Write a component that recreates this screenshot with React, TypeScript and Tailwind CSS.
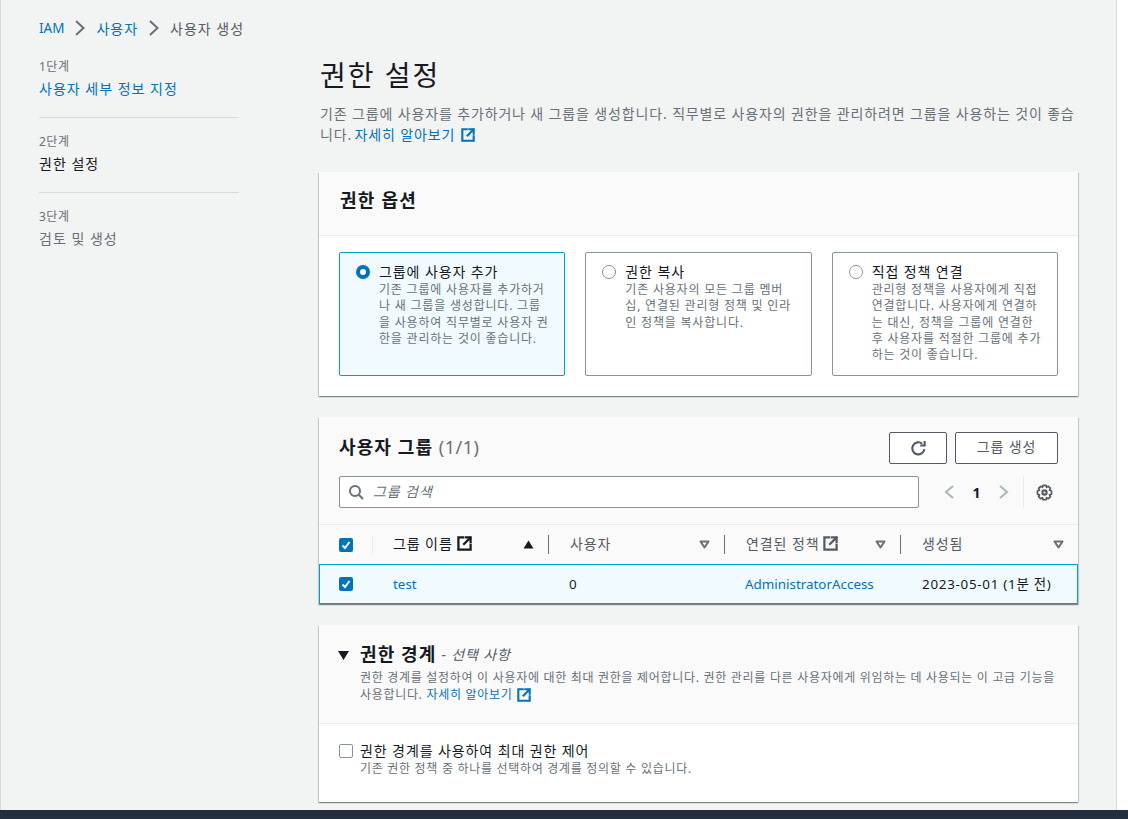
import React from "react";

const Ext = ({ className = "", size = 14 }: { className?: string; size?: number }) => (
  <svg width={size} height={size} viewBox="0 0 16 16" fill="none" stroke="currentColor" strokeWidth="2.4" strokeLinecap="square" className={"inline-block shrink-0 " + className}>
    <path d="M6.5 1.5H1.5v13h13V9.5" />
    <path d="M9.5 1.5h5V6.5" />
    <path d="M14 2L7.5 8.5" />
  </svg>
);

const Chevron = () => (
  <svg width="14" height="18" viewBox="0 0 14 18" fill="none" stroke="#687078" strokeWidth="2" className="shrink-0">
    <path d="M3 2l7.5 7-7.5 7" />
  </svg>
);

const Check = () => (
  <span className="flex h-[14px] w-[14px] shrink-0 items-center justify-center rounded-[2px] bg-[#0073bb]">
    <svg width="12" height="12" viewBox="0 0 12 12" fill="none" stroke="#fff" strokeWidth="2">
      <path d="M2.5 6.5l2.5 2.5 4.5-6" />
    </svg>
  </span>
);

const Sort = ({ color = "#687078", filled = false }: { color?: string; filled?: boolean }) => (
  <svg width="11" height="9" viewBox="0 0 11 9" className="shrink-0">
    {filled ? (
      <path d="M5.5 0.5L10.5 8.5H0.5z" fill={color} />
    ) : (
      <path d="M1.5 1.5h8L5.5 7.5z" fill="none" stroke={color} strokeWidth="2" strokeLinejoin="round" />
    )}
  </svg>
);

const Tile = ({ selected, title, lines }: { selected?: boolean; title: string; lines: string[] }) => (
  <div className={"flex h-[124px] flex-1 gap-[9px] rounded-[2px] border pl-[16px] pt-[10px] " + (selected ? "border-[#00a1c9] bg-[#f1faff]" : "border-[#879596] bg-white")}>
    {selected ? (
      <span className="mt-[2px] flex h-[14px] w-[14px] shrink-0 items-center justify-center rounded-full bg-[#0073bb]">
        <span className="h-[6px] w-[6px] rounded-full bg-white" />
      </span>
    ) : (
      <span className="mt-[2px] h-[14px] w-[14px] shrink-0 rounded-full border border-[#879596] bg-white" />
    )}
    <div className="min-w-0">
      <div className="whitespace-nowrap text-[14px] leading-[18px] tracking-[0.9px] text-[#16191f]">{title}</div>
      <div className="mt-[1px] text-[12px] leading-[16.25px] tracking-[0.8px] text-[#687078]">
        {lines.map((l) => (
          <div key={l} className="whitespace-nowrap">{l}</div>
        ))}
      </div>
    </div>
  </div>
);

const Th = ({ label, ext, dark, filled, last, pad }: { label: string; ext?: boolean; dark?: boolean; filled?: boolean; last?: boolean; pad: string }) => (
  <div className={"flex h-[19px] items-center justify-between " + pad + " " + (last ? "pr-[14px]" : "border-r border-[#687078] pr-[14px]")}>
    <span className={"-mt-[2px] flex items-center gap-[4px] whitespace-nowrap text-[14px] tracking-[0.9px] " + (dark ? "text-[#16191f]" : "text-[#545b64]")}>
      {label}
      {ext && <Ext size={15} />}
    </span>
    <Sort filled={filled} color={filled ? "#16191f" : "#687078"} />
  </div>
);

const Step = ({ step, label, tone, divider }: { step: string; label: string; tone: string; divider?: boolean }) => (
  <div className={divider ? "border-b border-[#d5dbdb] pb-[18px] mb-[15px]" : ""}>
    <div className="pt-[1px] text-[12px] leading-[16px] tracking-[0.5px] text-[#687078]">{step}</div>
    <div className={"mt-[4px] text-[14px] leading-[20px] tracking-[1px] " + tone}>{label}</div>
  </div>
);

const cardShadow = "bg-white shadow-[0_1px_1px_0_rgba(0,28,36,0.3),1px_1px_1px_0_rgba(0,28,36,0.15),-1px_1px_1px_0_rgba(0,28,36,0.15)]";

export default function App() {
  return (
    <div className="flex h-[819px] flex-col overflow-hidden bg-white font-['Noto_Sans','Noto_Sans_CJK_KR',sans-serif] text-[#16191f]">
      <div className="flex min-h-0 flex-1">
        <div className="w-[1117px] border-x border-[#d5dbdb] bg-[#f2f3f3] pt-[18px]">
          <div className="flex h-[20px] items-center gap-[9px] pl-[38px] text-[14px] text-[#545b64]">
            <span className="text-[13.5px] text-[#0073bb]">IAM</span>
            <Chevron />
            <span className="tracking-[1px] text-[#0073bb]">사용자</span>
            <Chevron />
            <span className="tracking-[1px]">사용자 생성</span>
          </div>
          <div className="mt-[20px] flex pl-[38px]">
            <aside className="w-[200px] shrink-0">
              <Step step="1단계" label="사용자 세부 정보 지정" tone="text-[#0073bb]" divider />
              <Step step="2단계" label="권한 설정" tone="text-[#16191f]" divider />
              <Step step="3단계" label="검토 및 생성" tone="text-[#687078]" />
            </aside>
            <main className="ml-[80px] w-[759px] shrink-0">
              <h1 className="-mt-[4px] ml-[1px] text-[28px] font-normal leading-[42px] tracking-[2px]">권한 설정</h1>
              <p className="ml-[1px] mt-[7px] w-[758px] text-[14px] leading-[21px] tracking-[0.86px] text-[#687078]">
                기존 그룹에 사용자를 추가하거나 새 그룹을 생성합니다. 직무별로 사용자의 권한을 관리하려면 그룹을 사용하는 것이 좋습니다.{" "}
                <span className="-ml-[2px] text-[#0073bb]">자세히 알아보기</span>{" "}
                <Ext size={14} className="ml-[1px] align-[-2px] text-[#0073bb]" />
              </p>

              <section className={"mt-[27px] " + cardShadow}>
                <div className="flex h-[64px] items-center border-b border-[#eaeded] bg-[#fafafa] pl-[21px] pb-[6px] text-[18px] font-bold tracking-[1.2px]">권한 옵션</div>
                <div className="flex gap-[20px] px-[20px] pb-[20px] pt-[16px]">
                  <Tile selected title="그룹에 사용자 추가" lines={["기존 그룹에 사용자를 추가하거", "나 새 그룹을 생성합니다. 그룹", "을 사용하여 직무별로 사용자 권", "한을 관리하는 것이 좋습니다."]} />
                  <Tile title="권한 복사" lines={["기존 사용자의 모든 그룹 멤버", "십, 연결된 관리형 정책 및 인라", "인 정책을 복사합니다."]} />
                  <Tile title="직접 정책 연결" lines={["관리형 정책을 사용자에게 직접", "연결합니다. 사용자에게 연결하", "는 대신, 정책을 그룹에 연결한", "후 사용자를 적절한 그룹에 추가", "하는 것이 좋습니다."]} />
                </div>
              </section>

              <section className={"mt-[21px] " + cardShadow}>
                <div className="border-b border-[#eaeded] bg-[#fafafa] px-[20px] pb-[16px] pt-[15px]">
                  <div className="flex items-center justify-between">
                    <div className="mb-[2px] text-[18px] font-bold tracking-[1.1px]">
                      사용자 그룹 <span className="font-normal tracking-[0.5px] text-[#687078]">(1/1)</span>
                    </div>
                    <div className="flex gap-[8px]">
                      <button className="flex h-[32px] w-[58px] items-center justify-center rounded-[2px] border border-[#545b64] bg-white text-[#545b64]">
                        <svg width="17" height="17" viewBox="0 0 16 16" fill="none" stroke="currentColor" strokeWidth="2">
                          <path d="M13.5 8.5A5.7 5.7 0 1 1 11.5 3.5" />
                          <path d="M13.8 1v4.2H9.6" strokeLinejoin="miter" />
                        </svg>
                      </button>
                      <button className="h-[32px] w-[103px] rounded-[2px] border border-[#545b64] bg-white pb-[3px] text-[14px] tracking-[0.9px] text-[#545b64]">그룹 생성</button>
                    </div>
                  </div>
                  <div className="mt-[12px] flex items-center">
                    <div className="flex h-[32px] w-[580px] shrink-0 items-center gap-[10px] rounded-[2px] border border-[#879596] bg-white pl-[8px]">
                      <svg width="16" height="16" viewBox="0 0 16 16" fill="none" stroke="#687078" strokeWidth="2" className="shrink-0">
                        <circle cx="7" cy="7" r="5" />
                        <path d="M10.8 10.8L15 15" />
                      </svg>
                      <span className="-ml-[1px] -mt-[2px] text-[14px] italic tracking-[0.9px] text-[#687078]">그룹 검색</span>
                    </div>
                    <div className="ml-[24px] flex w-[67px] shrink-0 items-center justify-between">
                      <svg width="12" height="16" viewBox="0 0 12 16" fill="none" stroke="#aab7b8" strokeWidth="2"><path d="M10 2L3 8l7 6" /></svg>
                      <span className="text-[14px] font-bold text-[#16191f]">1</span>
                      <svg width="12" height="16" viewBox="0 0 12 16" fill="none" stroke="#aab7b8" strokeWidth="2"><path d="M2 2l7 6-7 6" /></svg>
                    </div>
                    <div className="ml-[13px] flex h-[32px] w-[30px] shrink-0 items-center justify-end border-l border-[#eaeded]">
                      <svg width="17" height="17" viewBox="0 0 16 16" fill="none" stroke="#545b64" strokeWidth="2">
                        <circle cx="8" cy="8" r="2" />
                        <path d="M6.6 1.2h2.8l.5 1.9 1.7-.9 2 2-.9 1.7 1.9.5v3.2l-1.9.5.9 1.7-2 2-1.7-.9-.5 1.9H6.6l-.5-1.9-1.7.9-2-2 .9-1.7-1.9-.5V6.4l1.9-.5-.9-1.7 2-2 1.7.9z" strokeWidth="1.6" strokeLinejoin="round" />
                      </svg>
                    </div>
                  </div>
                </div>
                <div className="grid h-[39px] grid-cols-[54px_176px_176px_176px_1fr] items-center bg-[#fafafa]">
                  <div className="flex h-[19px] items-center border-r border-[#eaeded] pl-[20px]"><Check /></div>
                  <Th label="그룹 이름" ext dark filled pad="pl-[20px]" />
                  <Th label="사용자" pad="pl-[21px]" />
                  <Th label="연결된 정책" ext pad="pl-[21px]" />
                  <Th label="생성됨" last pad="pl-[21px]" />
                </div>
                <div className="grid h-[40px] grid-cols-[53px_176px_176px_176px_1fr] items-center border border-[#00a1c9] bg-[#f1faff] text-[13.4px]">
                  <div className="pl-[19px]"><Check /></div>
                  <div className="pl-[20px] text-[#0073bb]">test</div>
                  <div className="pl-[20px] text-[#16191f]">0</div>
                  <div className="pl-[20px] text-[#0073bb]">AdministratorAccess</div>
                  <div className="whitespace-nowrap pl-[21px] tracking-[0.72px] text-[#16191f]">2023-05-01 (1분 전)</div>
                </div>
              </section>

              <section className={"mt-[21px] " + cardShadow}>
                <div className="flex h-[99px] gap-[10px] border-b border-[#eaeded] bg-[#fafafa] pl-[19px] pt-[17px]">
                  <svg width="11" height="9" viewBox="0 0 11 9" className="mt-[9px] shrink-0"><path d="M0 0h11L5.5 9z" fill="#16191f" /></svg>
                  <div className="ml-[1px] min-w-0">
                    <div className="flex h-[24px] items-center gap-[5px]">
                      <span className="text-[18px] font-bold tracking-[1.1px]">권한 경계</span>
                      <span className="text-[14px] italic tracking-[0.9px] text-[#545b64]">- 선택 사항</span>
                    </div>
                    <p className="mt-[3px] w-[700px] text-[12px] leading-[17px] tracking-[0.7px] text-[#687078]">
                      권한 경계를 설정하여 이 사용자에 대한 최대 권한을 제어합니다. 권한 관리를 다른 사용자에게 위임하는 데 사용되는 이 고급 기능을 사용합니다.{" "}
                      <span className="text-[#0073bb]">자세히 알아보기</span>{" "}
                      <Ext size={14} className="ml-[1px] align-[-3px] text-[#0073bb]" />
                    </p>
                  </div>
                </div>
                <div className="flex h-[78px] gap-[7px] pl-[20px] pt-[18px]">
                  <span className="mt-[2px] h-[14px] w-[14px] shrink-0 rounded-[2px] border border-[#879596] bg-white" />
                  <div>
                    <div className="text-[14px] leading-[18px] tracking-[0.9px] text-[#16191f]">권한 경계를 사용하여 최대 권한 제어</div>
                    <div className="text-[12px] leading-[17px] tracking-[0.7px] text-[#687078]">기존 권한 정책 중 하나를 선택하여 경계를 정의할 수 있습니다.</div>
                  </div>
                </div>
              </section>
            </main>
          </div>
        </div>
      </div>
      <div className="h-[9px] shrink-0 bg-[#232f3e]" />
    </div>
  );
}
